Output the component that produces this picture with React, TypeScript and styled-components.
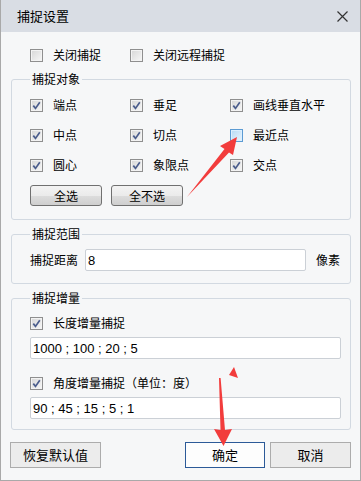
import React from 'react'
import styled, { createGlobalStyle } from 'styled-components'

const GlobalStyle = createGlobalStyle`
  html, body {
    margin: 0;
    padding: 0;
    background: #ffffff;
  }
  body {
    font-family: "Noto Sans CJK SC", "Noto Sans", sans-serif;
    font-size: 12px;
    color: #000;
  }
`

const Window = styled.div`
  position: relative;
  box-sizing: border-box;
  width: 361px;
  height: 481px;
  border: 1px solid #a9a9a9;
  border-top: none;
  background: #f6f7f8;
  display: flex;
  flex-direction: column;
  overflow: hidden;
`

const TitleBar = styled.div`
  height: 32px;
  flex: none;
  display: flex;
  align-items: center;
  justify-content: space-between;
  padding: 0 12px 0 16px;
  background: #d9dde4;
  font-size: 13px;
  line-height: 16px;
`

const CloseIcon = styled.svg`
  width: 11px;
  height: 11px;
  display: block;
`

const Body = styled.div`
  display: flex;
  flex-direction: column;
  padding: 0 9px 0 10px;
`

const TopRow = styled.div`
  display: flex;
  height: 20px;
  margin-top: 13px;
  padding-left: 19px;
`

const Option = styled.label<{ $width?: number }>`
  display: flex;
  align-items: center;
  gap: 10px;
  height: 100%;
  width: ${(p) => (p.$width ? `${p.$width}px` : 'auto')};
  line-height: 16px;
  white-space: nowrap;
`

const Box = styled.span<{ $hover?: boolean }>`
  box-sizing: border-box;
  width: 13px;
  height: 13px;
  flex: none;
  display: flex;
  align-items: center;
  justify-content: center;
  border: 1px solid ${(p) => (p.$hover ? '#5c9bd3' : '#8f8f8f')};
  background: ${(p) =>
    p.$hover
      ? 'linear-gradient(135deg, #b7daf5, #e8f4fd)'
      : 'linear-gradient(135deg, #d6d6d6, #f7f7f7)'};
  box-shadow: inset 0 0 0 1px ${(p) => (p.$hover ? '#dcefff' : '#f3f3f3')};
`

const Group = styled.fieldset<{ $pt: number; $pb: number }>`
  margin: 6px 0 0;
  padding: ${(p) => p.$pt}px 10px ${(p) => p.$pb}px 18px;
  border: 1px solid #d2d9e1;
  border-radius: 3px;
  min-width: 0;
`

const Legend = styled.legend`
  padding: 0 2px;
  font-size: 12px;
  line-height: 16px;
`

const Grid = styled.div`
  display: grid;
  grid-template-columns: repeat(3, 100px);
  grid-auto-rows: 30px;
`

const ButtonRow = styled.div`
  display: flex;
  gap: 9px;
  margin-top: 5px;
`

const GlossButton = styled.button`
  box-sizing: border-box;
  width: 72px;
  height: 21px;
  padding: 0;
  border: 1px solid #707070;
  border-radius: 3px;
  background: linear-gradient(#f3f3f3 0%, #ebebeb 50%, #dddddd 51%, #cfcfcf 100%);
  font-family: inherit;
  font-size: 12px;
  line-height: 16px;
  color: #000;
`

const FieldRow = styled.div`
  display: flex;
  align-items: center;
  height: 22px;
  line-height: 16px;
`

const Unit = styled.span`
  margin-left: 10px;
`

const TextInput = styled.input<{ $width: number; $mt?: number }>`
  box-sizing: border-box;
  width: ${(p) => p.$width}px;
  height: 22px;
  margin: ${(p) => p.$mt ?? 0}px 0 0 ${(p) => (p.$mt === undefined ? 7 : 0)}px;
  padding: 0 2px;
  border: 1px solid #cbd0d6;
  border-radius: 2px;
  background: #fff;
  font-family: "Liberation Sans", "Noto Sans CJK SC", sans-serif;
  font-size: 13px;
  color: #000;
  outline: none;
`

const CheckRow = styled.div<{ $mt: number }>`
  height: 20px;
  margin-top: ${(p) => p.$mt}px;
`

const Footer = styled.div`
  display: flex;
  justify-content: space-between;
  margin-top: 12px;
  margin-left: -1px;
`

const RightButtons = styled.div`
  display: flex;
  gap: 5px;
`

const FlatButton = styled.button<{ $w: number; $primary?: boolean }>`
  box-sizing: border-box;
  width: ${(p) => p.$w}px;
  height: 26px;
  padding: 0;
  border: 1px solid ${(p) => (p.$primary ? '#2c5a98' : '#acacac')};
  background: ${(p) => (p.$primary ? '#fdfdfd' : '#ececec')};
  font-family: inherit;
  font-size: 13px;
  line-height: 16px;
  color: #000;
`

const Overlay = styled.svg`
  position: absolute;
  left: 0;
  top: 0;
  width: 361px;
  height: 481px;
  pointer-events: none;
`

function CheckMark() {
  return (
    <svg width="9" height="9" viewBox="0 0 9 9">
      <path d="M1.3 4.6 L3.5 7.4 L7.8 1.2" fill="none" stroke="#4b5d8c" strokeWidth="1.7" />
    </svg>
  )
}

interface CheckProps {
  label: string
  checked?: boolean
  hover?: boolean
  width?: number
}

function Check({ label, checked, hover, width }: CheckProps) {
  return (
    <Option $width={width}>
      <Box $hover={hover}>{checked && <CheckMark />}</Box>
      <span>{label}</span>
    </Option>
  )
}

const targets: { label: string; checked: boolean; hover?: boolean }[] = [
  { label: '端点', checked: true },
  { label: '垂足', checked: true },
  { label: '画线垂直水平', checked: true },
  { label: '中点', checked: true },
  { label: '切点', checked: true },
  { label: '最近点', checked: false, hover: true },
  { label: '圆心', checked: true },
  { label: '象限点', checked: true },
  { label: '交点', checked: true },
]

export default function App() {
  return (
    <>
      <GlobalStyle />
      <Window>
        <TitleBar>
          <span>捕捉设置</span>
          <CloseIcon viewBox="0 0 11 11">
            <path d="M0.5 0.5 L10.5 10.5 M10.5 0.5 L0.5 10.5" stroke="#333" strokeWidth="1.2" />
          </CloseIcon>
        </TitleBar>
        <Body>
          <TopRow>
            <Check label="关闭捕捉" width={100} />
            <Check label="关闭远程捕捉" />
          </TopRow>

          <Group $pt={3} $pb={13}>
            <Legend>捕捉对象</Legend>
            <Grid>
              {targets.map((t) => (
                <Check key={t.label} label={t.label} checked={t.checked} hover={t.hover} />
              ))}
            </Grid>
            <ButtonRow>
              <GlossButton>全选</GlossButton>
              <GlossButton>全不选</GlossButton>
            </ButtonRow>
          </Group>

          <Group $pt={7} $pb={12}>
            <Legend>捕捉范围</Legend>
            <FieldRow>
              <span>捕捉距离</span>
              <TextInput $width={221} defaultValue="8" readOnly />
              <Unit>像素</Unit>
            </FieldRow>
          </Group>

          <Group $pt={7} $pb={10}>
            <Legend>捕捉增量</Legend>
            <CheckRow $mt={0}>
              <Check label="长度增量捕捉" checked />
            </CheckRow>
            <TextInput $width={311} $mt={4} defaultValue="1000 ; 100 ; 20 ; 5" readOnly />
            <CheckRow $mt={14}>
              <Check label="角度增量捕捉（单位：度）" checked />
            </CheckRow>
            <TextInput $width={311} $mt={4} defaultValue="90 ; 45 ; 15 ; 5 ; 1" readOnly />
          </Group>

          <Footer>
            <FlatButton $w={91}>恢复默认值</FlatButton>
            <RightButtons>
              <FlatButton $w={80} $primary>确定</FlatButton>
              <FlatButton $w={81}>取消</FlatButton>
            </RightButtons>
          </Footer>
        </Body>

        <Overlay viewBox="0 0 361 481">
          <polygon
            points="236,137 219,146 223.5,149 186,197 228,152.5 232,155"
            fill="#f23c3c"
          />
          <polygon
            points="218,378 219.6,378 224,430 231,429 222.5,446 213,429 219.5,430"
            fill="#f23c3c"
          />
          <polygon points="233,367 228,375 237,378" fill="#f23c3c" />
        </Overlay>
      </Window>
    </>
  )
}
